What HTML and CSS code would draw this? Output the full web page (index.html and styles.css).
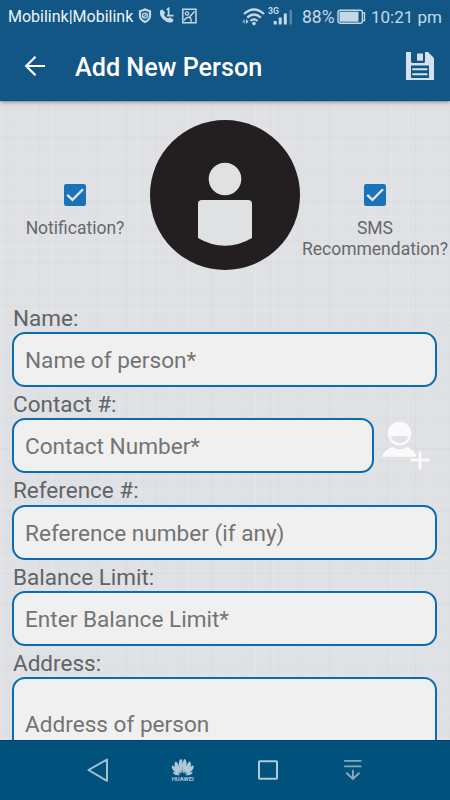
FILE: index.html
```html
<!DOCTYPE html>
<html lang="en">
<head>
<meta charset="utf-8">
<title>Add New Person</title>
<link rel="stylesheet" href="styles.css">
</head>
<body>
<div class="app">
  <header class="header">
    <div class="status">
      <span class="carrier">Mobilink|Mobilink</span>
      <svg class="status-left" width="62" height="20" viewBox="0 0 62 20" fill="none" stroke="#c5d8e5">
        <path d="M8 2.3 C10 3.6 12 3.9 13 4.2 V9 C13 12.3 10 14 8 15 C6 14 3 12.3 3 9 V4.2 C4 3.9 6 3.6 8 2.3Z" stroke-width="2.2"/>
        <circle cx="8" cy="8.6" r="2.5" stroke-width="1.3"/><path d="M6.3 10.3 9.7 6.9" stroke-width="1.2"/>
        <path d="M23.3 3.3 L25.5 2.5 28.2 5.8 26.8 7.8 Q28.3 10.5 31 11.6 L32.8 10.3 36.5 12.6 35.5 15 Q31 17 26 12.3 Q21.7 7.6 23.3 3.3Z" fill="#c5d8e5" stroke="none"/>
        <path d="M29.8 2.8 31.6 1.5 V8.5 M30 8.6 H36.5" stroke-width="1.7"/>
        <path d="M45.8 2.3 H59 V15.7 H45.8Z" stroke-width="1.5"/>
        <circle cx="50" cy="6.5" r="1.7" stroke-width="1.3"/><path d="M47 13.8 Q48.5 10.5 52.3 10.3 L57.5 4.5 M52.3 10.3 Q54.5 10.8 54 14.8" stroke-width="1.4"/>
      </svg>
      <svg class="signal" width="52" height="22" viewBox="0 0 52 22" fill="none" stroke="#c5d8e5">
        <path d="M2 8 Q12 -1 22 8 M5.2 11.6 Q12 5.5 18.8 11.6 M8.5 15 Q12 11.8 15.5 15" stroke-width="2.3"/>
        <circle cx="12" cy="17.6" r="1.8" fill="#c5d8e5" stroke="none"/>
        <path d="M0 15.5 3 13 V18Z" fill="#7fa3bd" stroke="none"/><path d="M6.5 15.5 4 13 V18Z" fill="#c5d8e5" stroke="none"/>
        <text x="26" y="7.5" class="net" textLength="11" lengthAdjust="spacingAndGlyphs">3G</text>
        <path d="M33.2 15 V18.5 M38.2 11.5 V18.5 M43.3 7.5 V18.5" stroke-width="3"/>
        <path d="M48.7 4 V18.5" stroke="#5d8aad" stroke-width="2.3"/>
      </svg>
      <span class="percent">88%</span>
      <svg class="battery" width="30" height="16" viewBox="0 0 30 16" fill="none" stroke="#c5d8e5">
        <rect x="1" y="1.2" width="24.4" height="13" rx="2" stroke-width="1.4"/>
        <rect x="2.5" y="2.7" width="19" height="10" fill="#c5d8e5" stroke="none"/>
        <path d="M25.5 3.8 H27.5 V11.6 H25.5" stroke-width="1.3"/>
      </svg>
      <span class="time">10:21 pm</span>
    </div>
    <div class="toolbar">
      <svg class="back" width="22" height="22" viewBox="0 0 22 22" fill="none" stroke="#fff" stroke-width="2.2"><path d="M21 11 H3 M11.5 1.8 2.2 11 11.5 20.2"/></svg>
      <h1 class="title">Add New Person</h1>
      <svg class="save" width="28" height="28" viewBox="0 0 28 28">
        <path d="M0 0 H5 V9.5 Q5 11 6.5 11 H17.5 Q19 11 19 9.5 V0 H22 L28 6 V28 H0Z" fill="#d2e1ed"/>
        <path d="M11 1.5 H17 V8.7 H11Z" fill="#d2e1ed"/>
        <path d="M5 13.5 H23 V26 H5Z" fill="#125685"/>
        <path d="M6.3 17.3 H21.5 M6.3 22.3 H21.5" stroke="#d2e1ed" stroke-width="2"/>
      </svg>
    </div>
  </header>
  <main class="content">
    <section class="profile">
      <div class="option">
        <svg class="check" width="22" height="22" viewBox="0 0 22 22"><rect width="22" height="22" rx="2.2" fill="#1a73b9"/><path d="M3.2 10.8 8.5 15.9 19 5.2" fill="none" stroke="#e4e6e8" stroke-width="2.3"/></svg>
        <span class="caption">Notification?</span>
      </div>
      <svg class="avatar" width="150" height="150" viewBox="0 0 150 150">
        <circle cx="75" cy="75" r="75" fill="#231f20"/>
        <circle cx="75" cy="59" r="16.3" fill="#e0e1e3"/>
        <path d="M48 84 Q48 80 52 80 H98 Q102 80 102 84 V118 Q89 125.7 75 125.7 Q61 125.7 48 118Z" fill="#e0e1e3"/>
      </svg>
      <div class="option">
        <svg class="check" width="22" height="22" viewBox="0 0 22 22"><rect width="22" height="22" rx="2.2" fill="#1a73b9"/><path d="M3.2 10.8 8.5 15.9 19 5.2" fill="none" stroke="#e4e6e8" stroke-width="2.3"/></svg>
        <span class="caption">SMS<br>Recommendation?</span>
      </div>
    </section>
    <form class="form">
      <div class="group"><div class="label">Name:</div><div class="field">Name of person*</div></div>
      <div class="group"><div class="label">Contact #:</div>
        <div class="row">
          <div class="field">Contact Number*</div>
          <svg class="add" width="64" height="55" viewBox="0 0 64 55" fill="none" stroke="#fafafa">
            <circle cx="25.6" cy="15.6" r="10.6" stroke-width="2.4"/>
            <path d="M15.6 18.6 V14 A10 10 0 0 1 35.6 14 V18.6 Q25.6 17.6 15.6 18.6Z" fill="#fafafa" stroke="none"/>
            <path d="M8 38.8 Q10.5 32 18.5 28.8 Q25.6 33.8 32.7 28.8 Q39.5 31.5 42 36.5 V38.8Z" fill="#fafafa" stroke="none"/>
            <path d="M36.5 42 H55.5 M46 33.5 V51.5" stroke-width="2.8"/>
          </svg>
        </div>
      </div>
      <div class="group"><div class="label">Reference #:</div><div class="field">Reference number (if any)</div></div>
      <div class="group"><div class="label">Balance Limit:</div><div class="field">Enter Balance Limit*</div></div>
      <div class="group"><div class="label">Address:</div><div class="field tall">Address of person</div></div>
    </form>
  </main>
  <nav class="nav">
    <svg width="24" height="28" viewBox="0 0 24 28" fill="none" stroke="#a4c0d0" stroke-width="2" stroke-linejoin="round"><path d="M3.5 13 22 2.5 V23.8Z"/></svg>
    <svg width="24" height="28" viewBox="0 0 24 28" fill="#b1c9d7">
      <path d="M11.2 16.5 C6.5 9 7.5 3 10 2 C12 3 12 9 11.2 16.5Z M12.2 16.5 C11.4 9 11.5 3 13.5 2 C16 3 17 9 12.2 16.5Z M10.2 16.5 C3 12 2.5 7 4.5 4.5 C7 5 9 11 10.2 16.5Z M13.2 16.5 C14.5 11 16.5 5 19 4.5 C21 7 20.5 12 13.2 16.5Z M9.2 17.2 C2 15 .2 11 1 8.5 C4 9 7 13 9.2 17.2Z M14.2 17.2 C16.5 13 19.5 9 22.4 8.5 C23.2 11 21.5 15 14.2 17.2Z M9 18.2 C4 18.5 2 17 2 14.7 C5 15 7 16.5 9 18.2Z M14.4 18.2 C16.5 16.5 18.5 15 21.5 14.7 C21.5 17 19.5 18.5 14.4 18.2Z"/>
      <text class="brand" x=".7" y="23.9" textLength="22" lengthAdjust="spacingAndGlyphs">HUAWEI</text>
    </svg>
    <svg width="24" height="28" viewBox="0 0 24 28" fill="none" stroke="#b1c9d7" stroke-width="2"><rect x="3" y="4.2" width="18" height="17.6" rx=".7"/></svg>
    <svg width="24" height="28" viewBox="0 0 24 28" fill="none" stroke="#83a9c0" stroke-width="1.9" stroke-linecap="round"><path d="M2.9 3.9 H18.7 M2.9 9.4 H18.7 M10.9 13.6 V21.7 M4.9 16.2 10.9 21.9 16.9 16.2"/></svg>
  </nav>
</div>
</body>
</html>
```
FILE: styles.css
```css
* { box-sizing: border-box; }
body { margin: 0; font-family: Roboto, "Liberation Sans", sans-serif; }
svg { display: block; flex: none; }
.app { width: 450px; height: 800px; display: flex; flex-direction: column; overflow: hidden; }
.header { flex: none; height: 101px; background: #125685; border-bottom: 1px solid #07508a; box-shadow: 0 1px 4px rgba(0, 0, 0, .45); z-index: 1; }
.status { height: 33px; display: flex; align-items: center; white-space: nowrap; color: #c5d8e5; }
.carrier { width: 126px; margin-left: 8px; font-size: 16px; color: #eef5fa; }
.status-left { margin-left: 3px; margin-top: 1px; }
.signal { margin-left: 43px; margin-top: 0; }
.net { font: 700 8.5px Roboto, sans-serif; fill: #c5d8e5; stroke: none; }
.percent { margin-left: 8px; width: 35px; font-size: 17.5px; }
.battery { margin-left: 0; }
.time { margin-left: 4px; font-size: 17px; }
.toolbar { height: 67px; display: flex; align-items: center; }
.back { margin: -2px 0 0 24px; }
.title { margin: 2px 0 0 29px; font-size: 25.2px; line-height: 30px; font-weight: 500; color: #fff; flex: 1; }
.save { margin: -1px 16px 0 0; }
.content {
  flex: 1; min-height: 0; overflow: hidden; padding-top: 19px;
  background-color: #dfe1e4;
  background-image:
    repeating-linear-gradient(90deg, rgba(255,255,255,.08) 0 1px, transparent 1px 7px, rgba(100,105,115,.02) 7px 8px, transparent 8px 17px),
    repeating-linear-gradient(90deg, transparent 0 9px, rgba(100,105,115,.015) 9px 11px, transparent 11px 23px, rgba(255,255,255,.08) 23px 24px, transparent 24px 29px),
    repeating-linear-gradient(0deg, rgba(255,255,255,.08) 0 1px, transparent 1px 5px, rgba(100,105,115,.02) 5px 6px, transparent 6px 13px),
    repeating-linear-gradient(0deg, transparent 0 11px, rgba(100,105,115,.015) 11px 13px, transparent 13px 27px, rgba(255,255,255,.08) 27px 28px, transparent 28px 31px);
}
.profile { display: grid; grid-template-columns: repeat(3, 150px); height: 184px; }
.option { display: flex; flex-direction: column; align-items: center; padding-top: 64px; }
.caption { margin-top: 12px; font-size: 17.5px; line-height: 20.7px; color: #66686b; text-align: center; white-space: nowrap; }
.form { padding: 0 13px 0 12px; }
.group { height: 86.2px; }
.label { height: 28.2px; padding-left: 1px; font-size: 22.5px; line-height: 28px; color: #626366; }
.field { height: 55px; flex: 1; border: 2px solid #0b6bb3; border-radius: 13px; background: #f0f0f0; padding-left: 11px; font-size: 22.6px; line-height: 54px; color: #747474; white-space: nowrap; }
.tall { height: 96px; line-height: 92px; }
.row { display: flex; margin-right: -13px; }
.add { margin-right: 12px; }
.nav { flex: none; height: 60px; background: #00527d; border-top: 1px solid #063e70; display: flex; align-items: center; gap: 61.5px; padding-left: 85px; }
.brand { font: 700 5.5px Roboto, sans-serif; }
```
